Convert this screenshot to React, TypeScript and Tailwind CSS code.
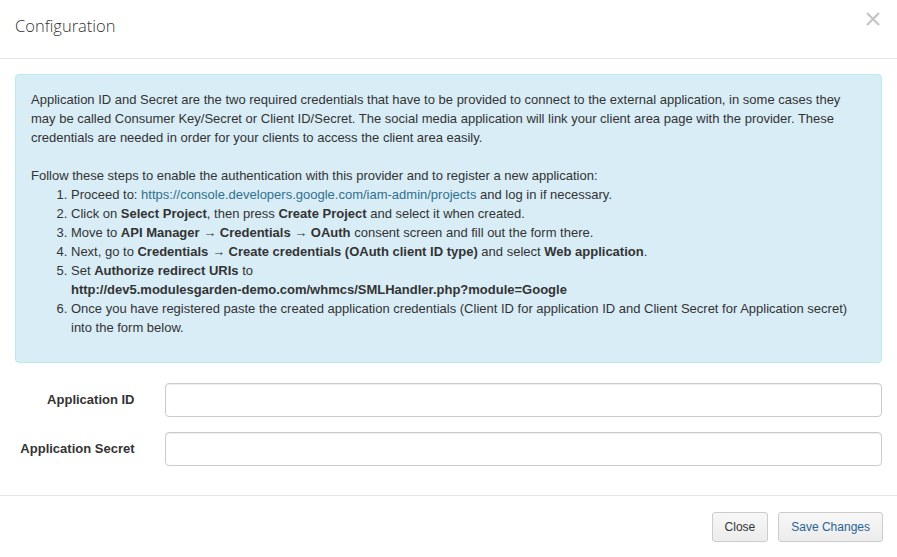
export default function App() {
  const body = "font-['Liberation_Sans',Arial,sans-serif] text-[13px] leading-[19px] text-[#333]";
  return (
    <div className={`w-[897px] h-[557px] bg-white flex flex-col ${body}`}>
      {/* header */}
      <div className="flex items-center justify-between h-[59px] px-[15px] border-b border-[#e5e5e5]">
        <h4 className="font-['Open_Sans',sans-serif] font-light text-[16.5px] text-[#333] leading-[26px] pb-[6px]">Configuration</h4>
        <button className="text-[#c4c4c4] mr-[2px] mb-[20px]" aria-label="close">
          <svg width="14" height="14" viewBox="0 0 14 14">
            <path d="M1 1 L13 13 M13 1 L1 13" stroke="currentColor" strokeWidth="2.2" />
          </svg>
        </button>
      </div>

      {/* body */}
      <div className="flex-1 p-[15px] flex flex-col">
        <div className="bg-[#d9edf7] border border-[#bce8f1] rounded-[4px] pt-[15px] px-[15px] pb-[15px] mb-[20px]">
          <p>
            Application ID and Secret are the two required credentials that have to be provided to connect to the external application, in some cases they may be called Consumer Key/Secret or Client ID/Secret. The social media application will link your client area page with the provider. These credentials are needed in order for your clients to access the client area easily.
            <br />
            <br />
            Follow these steps to enable the authentication with this provider and to register a new application:
          </p>
          <ol className="list-decimal pl-[40px] mb-[10px]">
            <li>
              Proceed to: <a className="text-[#31708f]">https://console.developers.google.com/iam-admin/projects</a> and log in if necessary.
            </li>
            <li>
              Click on <b>Select Project</b>, then press <b>Create Project</b> and select it when created.
            </li>
            <li>
              Move to <b>API Manager → Credentials → OAuth</b> consent screen and fill out the form there.
            </li>
            <li>
              Next, go to <b>Credentials → Create credentials (OAuth client ID type)</b> and select <b>Web application</b>.
            </li>
            <li>
              Set <b>Authorize redirect URIs</b> to
              <br />
              <b>http://dev5.modulesgarden-demo.com/whmcs/SMLHandler.php?module=Google</b>
            </li>
            <li>
              Once you have registered paste the created application credentials (Client ID for application ID and Client Secret for Application secret) into the form below.
            </li>
          </ol>
        </div>

        <div className="flex flex-col gap-[15px]">
          {["Application ID", "Application Secret"].map((l) => (
            <div key={l} className="flex items-start">
              <label className="w-[119.5px] shrink-0 text-right font-bold pt-[7px] mr-[15px]">{l}</label>
              <div className="flex-1 pl-[15px]">
                <input
                  type="text"
                  className="w-full h-[34px] border border-[#ccc] rounded-[4px] px-[12px] bg-white shadow-[inset_0_1px_1px_rgba(0,0,0,0.075)] outline-none"
                />
              </div>
            </div>
          ))}
        </div>
      </div>

      {/* footer */}
      <div className="flex justify-end gap-[10px] border-t border-[#e5e5e5] px-[14px] pt-[16px] pb-[15px]">
        <button className="h-[30px] px-[12px] text-[12px] border border-[#ccc] rounded-[3px] bg-gradient-to-b from-[#f7f7f7] to-[#ececec] text-[#333]">
          Close
        </button>
        <button className="h-[30px] px-[12px] text-[12px] border border-[#ccc] rounded-[3px] bg-gradient-to-b from-[#f7f7f7] to-[#ececec] text-[#2a6496]">
          Save Changes
        </button>
      </div>
    </div>
  );
}
